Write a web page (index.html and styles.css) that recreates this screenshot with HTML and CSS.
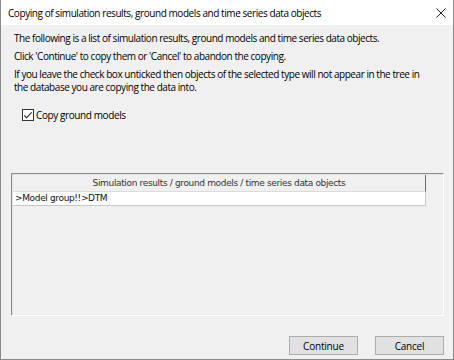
FILE: index.html
```html
<!DOCTYPE html>
<html lang="en">
<head>
  <meta charset="UTF-8" />
  <title>Copying of simulation results</title>
  <link rel="stylesheet" href="styles.css">
</head>
<body>
  <div class="dialog">
    <div class="titlebar">
      <span class="title">Copying of simulation results, ground models and time series data objects</span>
      <span class="close">
        <svg width="10" height="10" viewBox="0 0 10 10"><path d="M0.5 0.5 L9.5 9.5 M9.5 0.5 L0.5 9.5" stroke="#222" stroke-width="1"/></svg>
      </span>
    </div>

    <div class="content">
      <p class="line">The following is a list of simulation results, ground models and time series data objects.</p>
      <p class="line">Click 'Continue' to copy them or 'Cancel' to abandon the copying.</p>
      <p class="line">If you leave the check box unticked then objects of the selected type will not appear in the tree in the database you are copying the data into.</p>

      <label class="check-row">
        <span class="checkbox">
          <svg width="11" height="11" viewBox="0 0 11 11"><path d="M1.5 5.5 L4 8 L9.5 2" fill="none" stroke="#222" stroke-width="1.2"/></svg>
        </span>
        Copy ground models
      </label>

      <div class="listbox">
        <div class="list-header">Simulation results / ground models / time series data objects</div>
        <div class="list-row">&gt;Model group!!&gt;DTM</div>
      </div>

      <div class="buttons">
        <button class="btn">Continue</button>
        <button class="btn">Cancel</button>
      </div>
    </div>
  </div>
</body>
</html>
```
FILE: styles.css
```css
* {
  box-sizing: border-box;
}

body {
  margin: 0;
  font-family: 'Open Sans', sans-serif;
  color: #000;
  background: #f0f0f0;
}

.dialog {
  width: 454px;
  height: 360px;
  border: 1px solid #8a8a8a;
  border-top: none;
  display: flex;
  flex-direction: column;
  background: #f0f0f0;
}

.titlebar {
  height: 25px;
  background: #fff;
  display: flex;
  align-items: center;
  justify-content: space-between;
  padding: 0 7px 0 7px;
}

.title {
  font-size: 10px;
  letter-spacing: -0.43px;
}

.close {
  display: flex;
  align-items: center;
}

.content {
  flex: 1;
  display: flex;
  flex-direction: column;
  padding: 7px 9px 4px 13px;
}

.line {
  max-width: 416px;
  margin: 0 0 5px 0;
  font-size: 10px;
  line-height: 13px;
  letter-spacing: -0.45px;
}

.check-row {
  display: flex;
  align-items: center;
  gap: 2px;
  margin: 9px 0 0 8px;
  font-size: 10px;
  letter-spacing: -0.4px;
  height: 14px;
}

.checkbox {
  width: 12px;
  height: 12px;
  border: 1px solid #333;
  background: #fff;
  display: flex;
  align-items: center;
  justify-content: center;
}

.listbox {
  margin: 51px 0 0 -3px;
  height: 143px;
  border-top: 1px solid #8c8c8c;
  border-left: 1px solid #8c8c8c;
  border-right: 1px solid #fff;
  border-bottom: 1px solid #fff;
  box-shadow: inset 1px 1px 0 #e3e3e3;
  font-family: 'DejaVu Sans', sans-serif;
  font-size: 9px;
  letter-spacing: -0.35px;
}

.list-header {
  width: 413px;
  height: 17px;
  margin: 1px 0 0 1px;
  text-align: center;
  line-height: 17px;
  border-right: 1px solid #696969;
  border-bottom: 1px solid #dcdcdc;
  background: #f0f0f0;
  color: #333;
}

.list-row {
  width: 413px;
  height: 14px;
  margin-left: 1px;
  background: #fff;
  line-height: 13px;
  padding-left: 2px;
  border-right: 1px solid #c8c8c8;
  border-bottom: 1px solid #c8c8c8;
  color: #111;
}

.buttons {
  margin-top: auto;
  display: flex;
  justify-content: flex-end;
  gap: 17px;
}

.btn {
  width: 69px;
  height: 19px;
  font-family: 'Open Sans', sans-serif;
  font-size: 10px;
  letter-spacing: -0.2px;
  background: #e1e1e1;
  border: 1px solid #adadad;
  padding: 0;
  color: #000;
}
```
